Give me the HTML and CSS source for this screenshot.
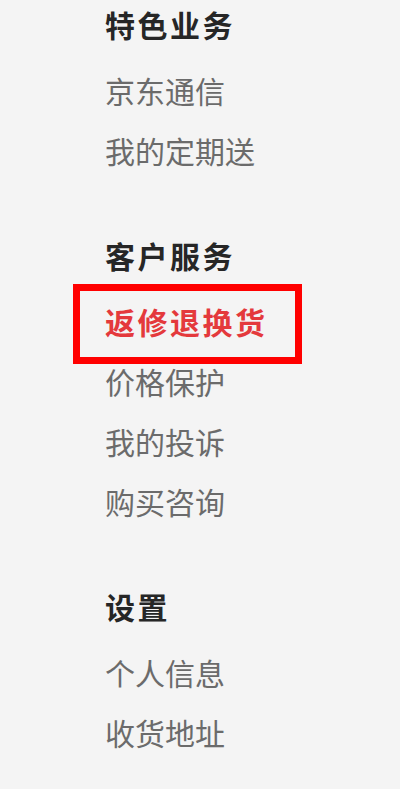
FILE: index.html
```html
<!DOCTYPE html>
<html lang="zh-CN">
<head>
<meta charset="utf-8">
<title>菜单</title>
<link rel="stylesheet" href="styles.css">
</head>
<body>
<nav class="side-menu">
  <section class="menu-group">
    <h3 class="menu-title">特色业务</h3>
    <ul class="menu-list">
      <li class="menu-item">京东通信</li>
      <li class="menu-item">我的定期送</li>
    </ul>
  </section>
  <section class="menu-group">
    <h3 class="menu-title">客户服务</h3>
    <ul class="menu-list">
      <li class="menu-item menu-item--active"><span class="active-label">返修退换货</span></li>
      <li class="menu-item">价格保护</li>
      <li class="menu-item">我的投诉</li>
      <li class="menu-item">购买咨询</li>
    </ul>
  </section>
  <section class="menu-group">
    <h3 class="menu-title">设置</h3>
    <ul class="menu-list">
      <li class="menu-item">个人信息</li>
      <li class="menu-item">收货地址</li>
    </ul>
  </section>
</nav>
</body>
</html>
```
FILE: styles.css
```css
html, body {
  margin: 0;
  padding: 0;
  background: #f4f4f4;
}

body {
  font-family: "Noto Sans CJK SC", "Noto Sans", sans-serif;
  width: 400px;
  min-height: 789px;
}

.side-menu {
  display: flex;
  flex-direction: column;
  gap: 48px;
  padding-left: 105px;
}

.menu-group {
  display: flex;
  flex-direction: column;
}

.menu-title {
  margin: 0 0 9px 0;
  padding: 0 0 6px 0;
  font-size: 30px;
  line-height: 48px;
  height: 48px;
  font-weight: 700;
  letter-spacing: 2.5px;
  color: #262626;
}

.menu-list {
  list-style: none;
  margin: 0;
  padding: 0;
}

.menu-item {
  font-size: 30px;
  line-height: 54px;
  height: 54px;
  padding-bottom: 6px;
  color: #6b6b6b;
  white-space: nowrap;
}

.menu-item--active {
  color: #e4393c;
  font-weight: 700;
  letter-spacing: 2.5px;
}

.active-label {
  position: relative;
  display: inline-block;
}

.active-label::before {
  content: "";
  position: absolute;
  top: -10px;
  bottom: -16px;
  left: -32px;
  right: -34px;
  border: 7px solid #ff0000;
}
```
